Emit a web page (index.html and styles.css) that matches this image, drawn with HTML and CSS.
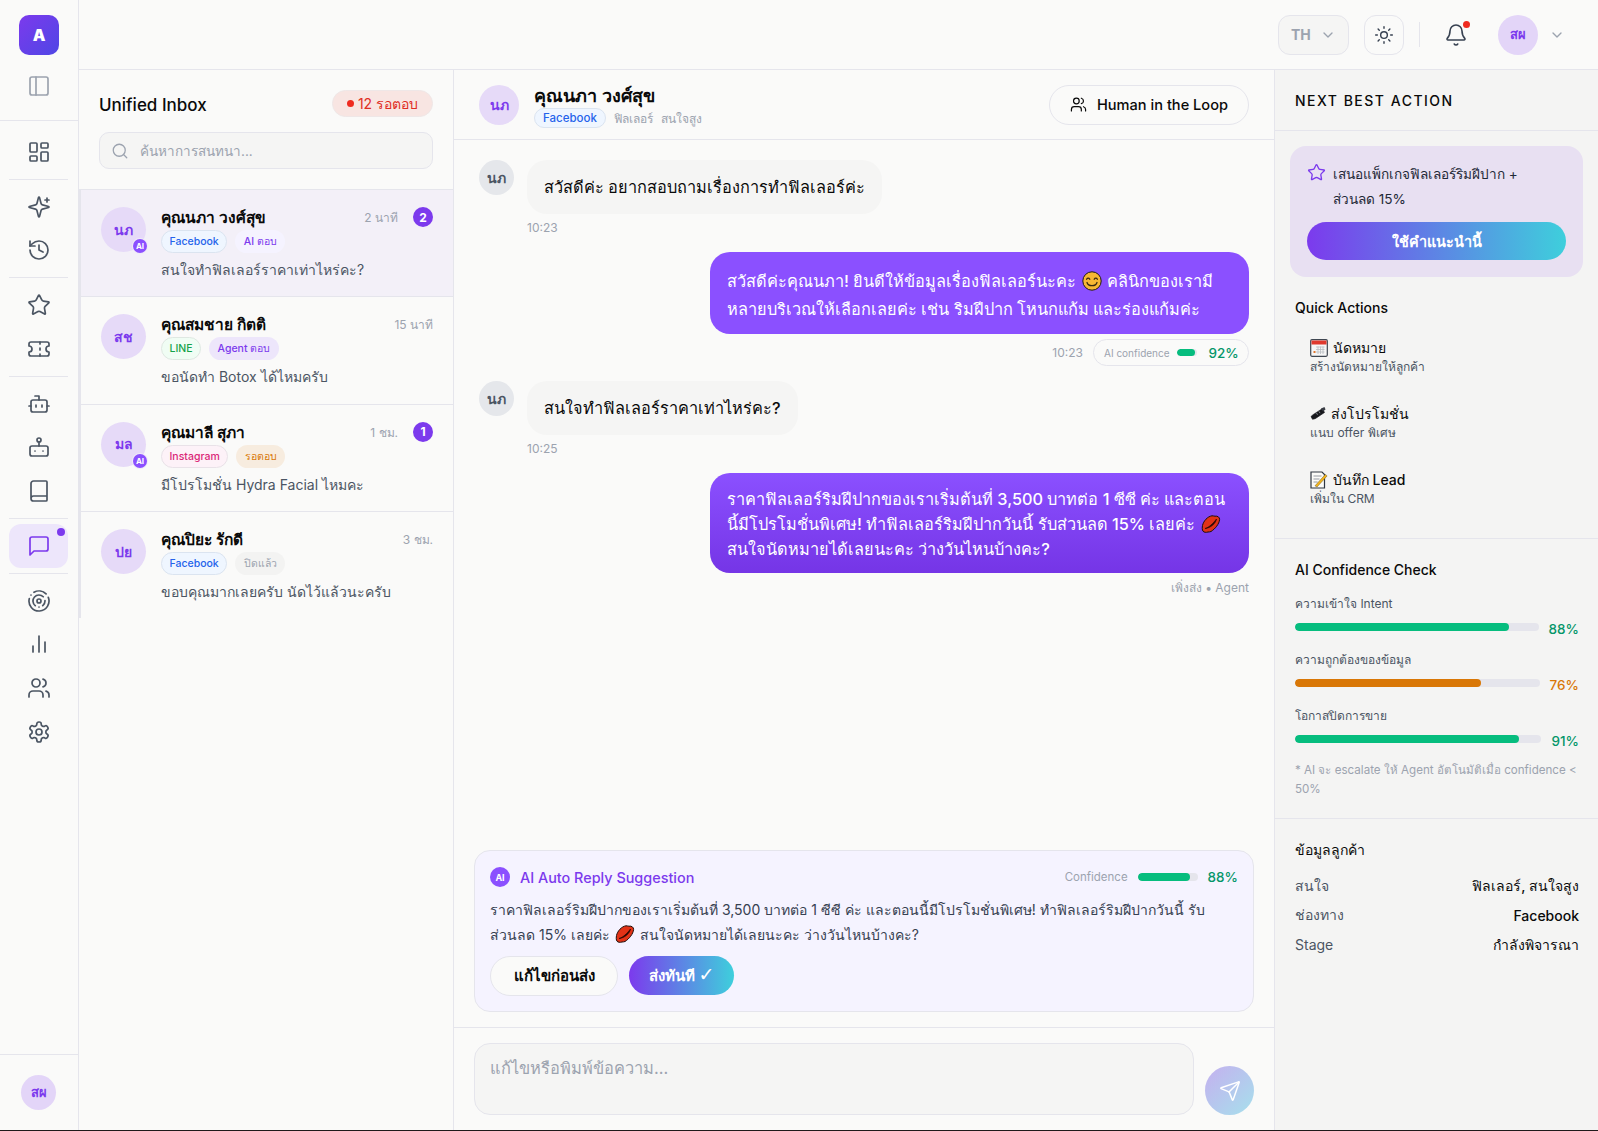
FILE: index.html
```html
<!DOCTYPE html>
<html lang="th">
<head>
<meta charset="utf-8">
<title>Unified Inbox</title>
<link rel="stylesheet" href="styles.css">
</head>
<body>
<svg class="defs" width="0" height="0">
<defs>
<symbol id="i-panel" viewBox="0 0 24 24"><rect x="3" y="3" width="18" height="18" rx="2"/><path d="M9 3v18"/></symbol>
<symbol id="i-dash" viewBox="0 0 24 24"><rect x="3" y="3" width="7" height="9" rx="1"/><rect x="14" y="3" width="7" height="5" rx="1"/><rect x="14" y="12" width="7" height="9" rx="1"/><rect x="3" y="16" width="7" height="5" rx="1"/></symbol>
<symbol id="i-sparkle" viewBox="0 0 24 24"><path d="M9.937 15.5A2 2 0 0 0 8.5 14.063l-6.135-1.582a.5.5 0 0 1 0-.962L8.5 9.936A2 2 0 0 0 9.937 8.5l1.582-6.135a.5.5 0 0 1 .963 0L14.063 8.5A2 2 0 0 0 15.5 9.937l6.135 1.581a.5.5 0 0 1 0 .964L15.5 14.063a2 2 0 0 0-1.437 1.437l-1.582 6.135a.5.5 0 0 1-.963 0z"/><path d="M20 3v4M22 5h-4"/></symbol>
<symbol id="i-history" viewBox="0 0 24 24"><path d="M3 12a9 9 0 1 0 9-9 9.75 9.75 0 0 0-6.74 2.74L3 8"/><path d="M3 3v5h5"/><path d="M12 7v5l4 2"/></symbol>
<symbol id="i-star" viewBox="0 0 24 24"><path d="M11.525 2.295a.53.53 0 0 1 .95 0l2.31 4.679a2.123 2.123 0 0 0 1.595 1.16l5.166.756a.53.53 0 0 1 .294.904l-3.736 3.638a2.123 2.123 0 0 0-.611 1.878l.882 5.14a.53.53 0 0 1-.771.56l-4.618-2.428a2.122 2.122 0 0 0-1.973 0L6.396 21.01a.53.53 0 0 1-.77-.56l.881-5.139a2.122 2.122 0 0 0-.611-1.879L2.16 9.795a.53.53 0 0 1 .294-.906l5.165-.755a2.122 2.122 0 0 0 1.597-1.16z"/></symbol>
<symbol id="i-ticket" viewBox="0 0 24 24"><path d="M2 9a3 3 0 0 1 0 6v2a2 2 0 0 0 2 2h16a2 2 0 0 0 2-2v-2a3 3 0 0 1 0-6V7a2 2 0 0 0-2-2H4a2 2 0 0 0-2 2Z"/><path d="M13 5v2M13 17v2M13 11v2"/></symbol>
<symbol id="i-bot" viewBox="0 0 24 24"><path d="M12 8V4H8"/><rect x="4" y="8" width="16" height="12" rx="2"/><path d="M2 14h2M20 14h2M15 13v2M9 13v2"/></symbol>
<symbol id="i-bot2" viewBox="0 0 24 24"><rect x="3" y="11" width="18" height="10" rx="2"/><circle cx="12" cy="5" r="2"/><path d="M12 7v4M8 16h.01M16 16h.01"/></symbol>
<symbol id="i-book" viewBox="0 0 24 24"><path d="M4 19.5v-15A2.5 2.5 0 0 1 6.5 2H19a1 1 0 0 1 1 1v18a1 1 0 0 1-1 1H6.5a1 1 0 0 1 0-5H20"/></symbol>
<symbol id="i-chat" viewBox="0 0 24 24"><path d="M21 15a2 2 0 0 1-2 2H7l-4 4V5a2 2 0 0 1 2-2h14a2 2 0 0 1 2 2z"/></symbol>
<symbol id="i-target" viewBox="0 0 24 24"><path d="M19.07 4.93A10 10 0 0 0 6.99 3.34M4 6h.01M2.29 9.62a10 10 0 1 0 19.02-1.27M16.24 7.76a6 6 0 1 0-8.01 8.91M12 18h.01M17.99 11.66a6 6 0 0 1-2.22 5"/><circle cx="12" cy="12" r="2"/></symbol>
<symbol id="i-bars" viewBox="0 0 24 24"><path d="M18 20V10M12 20V4M6 20v-6"/></symbol>
<symbol id="i-users" viewBox="0 0 24 24"><path d="M16 21v-2a4 4 0 0 0-4-4H6a4 4 0 0 0-4 4v2"/><circle cx="9" cy="7" r="4"/><path d="M22 21v-2a4 4 0 0 0-3-3.87M16 3.13a4 4 0 0 1 0 7.75"/></symbol>
<symbol id="i-gear" viewBox="0 0 24 24"><path d="M12.22 2h-.44a2 2 0 0 0-2 2v.18a2 2 0 0 1-1 1.73l-.43.25a2 2 0 0 1-2 0l-.15-.08a2 2 0 0 0-2.73.73l-.22.38a2 2 0 0 0 .73 2.73l.15.1a2 2 0 0 1 1 1.72v.51a2 2 0 0 1-1 1.74l-.15.09a2 2 0 0 0-.73 2.73l.22.38a2 2 0 0 0 2.73.73l.15-.08a2 2 0 0 1 2 0l.43.25a2 2 0 0 1 1 1.73V20a2 2 0 0 0 2 2h.44a2 2 0 0 0 2-2v-.18a2 2 0 0 1 1-1.73l.43-.25a2 2 0 0 1 2 0l.15.08a2 2 0 0 0 2.73-.73l.22-.39a2 2 0 0 0-.73-2.73l-.15-.08a2 2 0 0 1-1-1.74v-.5a2 2 0 0 1 1-1.74l.15-.09a2 2 0 0 0 .73-2.73l-.22-.38a2 2 0 0 0-2.73-.73l-.15.08a2 2 0 0 1-2 0l-.43-.25a2 2 0 0 1-1-1.73V4a2 2 0 0 0-2-2z"/><circle cx="12" cy="12" r="3"/></symbol>
<symbol id="i-sun" viewBox="0 0 24 24"><circle cx="12" cy="12" r="4"/><path d="M12 2v2M12 20v2M4.93 4.93l1.41 1.41M17.66 17.66l1.41 1.41M2 12h2M20 12h2M6.34 17.66l-1.41 1.41M19.07 4.93l-1.41 1.41"/></symbol>
<symbol id="i-bell" viewBox="0 0 24 24"><path d="M10.268 21a2 2 0 0 0 3.464 0"/><path d="M3.262 15.326A1 1 0 0 0 4 17h16a1 1 0 0 0 .74-1.673C19.41 13.956 18 12.499 18 8A6 6 0 0 0 6 8c0 4.499-1.411 5.956-2.738 7.326"/></symbol>
<symbol id="i-search" viewBox="0 0 24 24"><circle cx="11" cy="11" r="8"/><path d="m21 21-4.3-4.3"/></symbol>
<symbol id="i-send" viewBox="0 0 24 24"><path d="M14.536 21.686a.5.5 0 0 0 .937-.024l6.5-19a.496.496 0 0 0-.635-.635l-19 6.5a.5.5 0 0 0-.024.937l7.93 3.18a2 2 0 0 1 1.112 1.11z"/><path d="m21.854 2.147-10.94 10.939"/></symbol>
<symbol id="i-chev" viewBox="0 0 24 24"><path d="m6 9 6 6 6-6"/></symbol>
<symbol id="e-smile" viewBox="0 0 20 20"><circle cx="10" cy="10" r="9.2" fill="#f7b733" stroke="#1f1a12" stroke-width="1"/><path d="M4.6 8.2c.8-1.4 2.4-1.4 3.2 0M12.2 8.2c.8-1.4 2.4-1.4 3.2 0" fill="none" stroke="#3a2a10" stroke-width="1.3" stroke-linecap="round"/><path d="M5 11.5c1.2 4.2 8.8 4.2 10 0" fill="none" stroke="#3a2a10" stroke-width="1.3" stroke-linecap="round"/></symbol>
<symbol id="e-lips" viewBox="0 0 20 20"><path d="M1.500 11.500C2.500 7 6.500 2.500 11 1.800c1.200-.2 2 .5 3 .4 2.400-.5 4.800 1 4.600 3.300C18.200 10 14 15 10 17.500c-1 .6-2 .2-3 .5-2 .6-4 .4-5-.8-1-1.400-.8-3.800-.5-5.700z" fill="#e23216" stroke="#1d0f0c" stroke-width="1"/><path d="M4 14.500c4-1 8-5 11.500-9.500C14.800 9.500 9.500 14 4 14.500z" fill="#2a0805" stroke="#2a0805" stroke-width=".7"/></symbol>
<symbol id="e-cal" viewBox="0 0 18 18"><rect x=".7" y=".7" width="16.600" height="16.600" rx="1.200" fill="#f6f6f6" stroke="#3f4650" stroke-width="1.200"/><rect x="1.500" y="1.500" width="15" height="4" fill="#e0392e"/><path d="M6 8h8.500M6 10.500h8.500M6 13h8.500M8 7.500v7.500M10.500 7.500v7.500M13 7.500v7.500" stroke="#b9bcc2" stroke-width=".8"/><rect x="3.500" y="12" width="2" height="2" fill="#e0762e"/></symbol>
<symbol id="e-syringe" viewBox="0 0 16 16"><path d="M1 11.500l1.500 2.800 2.700-.6 9.300-6.200-2-4-9.500 6.200z" fill="#17181c" stroke="#17181c" stroke-width=".6"/><path d="M11 3.500l3.500-1.500 1 2.500-2.500 2z" fill="#3a3d45"/><path d="M6.500 8l1 1.800M9 6.400l1 1.800" stroke="#9aa0a8" stroke-width=".8"/></symbol>
<symbol id="e-memo" viewBox="0 0 18 18"><path d="M1 1h11l2.500 2.500V17H1z" fill="#fbfbf8" stroke="#2f3640" stroke-width="1.200"/><path d="M3.500 5h8M3.500 8h6M3.500 11h4" stroke="#8a8f98" stroke-width=".9"/><path d="M5 14.800 15.300 3.400l1.800 1.500L7 16z" fill="#f4b41a" stroke="#6b5a2a" stroke-width=".5"/></symbol>
</defs>
</svg>
<div class="app">
  <aside class="rail">
    <div class="rail-top">
      <div class="logo">A</div>
      <svg class="ico ico-muted toggle"><use href="#i-panel"/></svg>
    </div>
    <nav class="rail-nav">
      <div class="group group-first">
        <a class="nav"><svg class="ico"><use href="#i-dash"/></svg></a>
      </div>
      <div class="group">
        <a class="nav"><svg class="ico"><use href="#i-sparkle"/></svg></a>
        <a class="nav"><svg class="ico"><use href="#i-history"/></svg></a>
      </div>
      <div class="group">
        <a class="nav"><svg class="ico"><use href="#i-star"/></svg></a>
        <a class="nav"><svg class="ico"><use href="#i-ticket"/></svg></a>
      </div>
      <div class="group">
        <a class="nav"><svg class="ico"><use href="#i-bot"/></svg></a>
        <a class="nav"><svg class="ico"><use href="#i-bot2"/></svg></a>
        <a class="nav"><svg class="ico"><use href="#i-book"/></svg></a>
      </div>
      <div class="group">
        <a class="nav nav-active"><svg class="ico"><use href="#i-chat"/></svg><span class="nav-dot"></span></a>
      </div>
      <div class="group group-last">
        <a class="nav"><svg class="ico"><use href="#i-target"/></svg></a>
        <a class="nav"><svg class="ico"><use href="#i-bars"/></svg></a>
        <a class="nav"><svg class="ico"><use href="#i-users"/></svg></a>
        <a class="nav"><svg class="ico"><use href="#i-gear"/></svg></a>
      </div>
    </nav>
    <div class="rail-foot"><div class="avatar av-35 av-user">สผ</div></div>
  </aside>

  <div class="main">
    <header class="topbar">
      <div class="lang"><span>TH</span><svg class="ico ico-chev"><use href="#i-chev"/></svg></div>
      <div class="theme"><svg class="ico ico-sun"><use href="#i-sun"/></svg></div>
      <span class="top-sep"></span>
      <div class="bell"><svg class="ico ico-bell"><use href="#i-bell"/></svg><span class="bell-dot"></span></div>
      <div class="avatar av-40 av-user">สผ</div>
      <svg class="ico ico-chev ico-chev-user"><use href="#i-chev"/></svg>
    </header>

    <div class="columns">
      <section class="inbox">
        <div class="inbox-head">
          <div class="inbox-title">
            <h1>Unified Inbox</h1>
            <span class="wait-badge"><i></i>12 รอตอบ</span>
          </div>
          <div class="search"><svg class="ico ico-search"><use href="#i-search"/></svg><span>ค้นหาการสนทนา...</span></div>
        </div>
        <div class="threads">
          <article class="thread thread-active">
            <div class="avatar-wrap"><div class="avatar av-45">นภ</div><span class="ai-mini">AI</span></div>
            <div class="thread-body">
              <div class="thread-top"><strong>คุณนภา วงศ์สุข</strong><time>2 นาที</time><span class="count">2</span></div>
              <div class="tags"><span class="tag tag-fb">Facebook</span><span class="tag tag-ai">AI ตอบ</span></div>
              <p>สนใจทำฟิลเลอร์ราคาเท่าไหร่คะ?</p>
            </div>
          </article>
          <article class="thread">
            <div class="avatar-wrap"><div class="avatar av-45">สช</div></div>
            <div class="thread-body">
              <div class="thread-top"><strong>คุณสมชาย กิตติ</strong><time>15 นาที</time></div>
              <div class="tags"><span class="tag tag-line">LINE</span><span class="tag tag-agent">Agent ตอบ</span></div>
              <p>ขอนัดทำ Botox ได้ไหมครับ</p>
            </div>
          </article>
          <article class="thread">
            <div class="avatar-wrap"><div class="avatar av-45">มล</div><span class="ai-mini">AI</span></div>
            <div class="thread-body">
              <div class="thread-top"><strong>คุณมาลี สุภา</strong><time>1 ชม.</time><span class="count">1</span></div>
              <div class="tags"><span class="tag tag-ig">Instagram</span><span class="tag tag-wait">รอตอบ</span></div>
              <p>มีโปรโมชั่น Hydra Facial ไหมคะ</p>
            </div>
          </article>
          <article class="thread">
            <div class="avatar-wrap"><div class="avatar av-45">ปย</div></div>
            <div class="thread-body">
              <div class="thread-top"><strong>คุณปิยะ รักดี</strong><time>3 ชม.</time></div>
              <div class="tags"><span class="tag tag-fb">Facebook</span><span class="tag tag-closed">ปิดแล้ว</span></div>
              <p>ขอบคุณมากเลยครับ นัดไว้แล้วนะครับ</p>
            </div>
          </article>
        </div>
      </section>

      <section class="chat">
        <header class="chat-head">
          <div class="avatar av-40">นภ</div>
          <div class="chat-who">
            <h2>คุณนภา วงศ์สุข</h2>
            <div class="chat-sub"><span class="tag tag-fb tag-sm">Facebook</span><span>ฟิลเลอร์</span><span>สนใจสูง</span></div>
          </div>
          <button class="hitl"><svg class="ico ico-hitl"><use href="#i-users"/></svg>Human in the Loop</button>
        </header>

        <div class="messages">
          <div class="msg">
            <div class="avatar av-35 av-gray">นภ</div>
            <div class="msg-col">
              <div class="bubble bubble-in">สวัสดีค่ะ อยากสอบถามเรื่องการทำฟิลเลอร์ค่ะ</div>
              <div class="msg-time">10:23</div>
            </div>
          </div>
          <div class="msg msg-out">
            <div class="bubble bubble-out">สวัสดีค่ะคุณนภา! ยินดีให้ข้อมูลเรื่องฟิลเลอร์นะคะ <svg class="emoji"><use href="#e-smile"/></svg> คลินิกของเรามีหลายบริเวณให้เลือกเลยค่ะ เช่น ริมฝีปาก โหนกแก้ม และร่องแก้มค่ะ</div>
            <div class="msg-meta">
              <span>10:23</span>
              <span class="conf-pill"><em>AI confidence</em><span class="mini-track"><span class="mini-fill fill-92"></span></span><b>92%</b></span>
            </div>
          </div>
          <div class="msg">
            <div class="avatar av-35 av-gray">นภ</div>
            <div class="msg-col">
              <div class="bubble bubble-in">สนใจทำฟิลเลอร์ราคาเท่าไหร่คะ?</div>
              <div class="msg-time">10:25</div>
            </div>
          </div>
          <div class="msg msg-out">
            <div class="bubble bubble-out bubble-deep">ราคาฟิลเลอร์ริมฝีปากของเราเริ่มต้นที่ 3,500 บาทต่อ 1 ซีซี ค่ะ และตอนนี้มีโปรโมชั่นพิเศษ! ทำฟิลเลอร์ริมฝีปากวันนี้ รับส่วนลด 15% เลยค่ะ <svg class="emoji"><use href="#e-lips"/></svg> สนใจนัดหมายได้เลยนะคะ ว่างวันไหนบ้างคะ?</div>
            <div class="msg-meta"><span>เพิ่งส่ง • Agent</span></div>
          </div>
        </div>

        <div class="suggest">
          <div class="suggest-head">
            <span class="ai-dot">AI</span>
            <h3>AI Auto Reply Suggestion</h3>
            <span class="suggest-conf">Confidence</span>
            <span class="track-sm"><span class="fill-sm"></span></span>
            <b class="pct-green">88%</b>
          </div>
          <p>ราคาฟิลเลอร์ริมฝีปากของเราเริ่มต้นที่ 3,500 บาทต่อ 1 ซีซี ค่ะ และตอนนี้มีโปรโมชั่นพิเศษ! ทำฟิลเลอร์ริมฝีปากวันนี้ รับส่วนลด 15% เลยค่ะ <svg class="emoji"><use href="#e-lips"/></svg> สนใจนัดหมายได้เลยนะคะ ว่างวันไหนบ้างคะ?</p>
          <div class="suggest-actions">
            <button class="btn-outline">แก้ไขก่อนส่ง</button>
            <button class="btn-grad">ส่งทันที <span class="tick">✓</span></button>
          </div>
        </div>

        <div class="composer">
          <div class="composer-input">แก้ไขหรือพิมพ์ข้อความ...</div>
          <button class="send"><svg class="ico ico-send"><use href="#i-send"/></svg></button>
        </div>
      </section>

      <aside class="side">
        <div class="side-head"><h2>NEXT BEST ACTION</h2></div>
        <div class="nba-wrap">
          <div class="nba">
            <div class="nba-text"><svg class="ico ico-star"><use href="#i-star"/></svg><span>เสนอแพ็กเกจฟิลเลอร์ริมฝีปาก + ส่วนลด 15%</span></div>
            <button class="nba-btn">ใช้คำแนะนำนี้</button>
          </div>
        </div>
        <div class="side-sec quick">
          <h3>Quick Actions</h3>
          <div class="qa"><b><svg class="emoji emoji-qa"><use href="#e-cal"/></svg> นัดหมาย</b><small>สร้างนัดหมายให้ลูกค้า</small></div>
          <div class="qa"><b><svg class="emoji emoji-qa emoji-syringe"><use href="#e-syringe"/></svg> ส่งโปรโมชั่น</b><small>แนบ offer พิเศษ</small></div>
          <div class="qa"><b><svg class="emoji emoji-qa"><use href="#e-memo"/></svg> บันทึก Lead</b><small>เพิ่มใน CRM</small></div>
        </div>
        <div class="side-sec checks">
          <h3>AI Confidence Check</h3>
          <div class="check"><label>ความเข้าใจ Intent</label><div class="check-row"><span class="track"><span class="fill fill-88"></span></span><b class="pct-green">88%</b></div></div>
          <div class="check"><label>ความถูกต้องของข้อมูล</label><div class="check-row"><span class="track"><span class="fill fill-76"></span></span><b class="pct-amber">76%</b></div></div>
          <div class="check"><label>โอกาสปิดการขาย</label><div class="check-row"><span class="track"><span class="fill fill-91"></span></span><b class="pct-green">91%</b></div></div>
          <p class="note">* AI จะ escalate ให้ Agent อัตโนมัติเมื่อ confidence &lt; 50%</p>
        </div>
        <div class="side-sec cust">
          <h3>ข้อมูลลูกค้า</h3>
          <div class="kv"><span>สนใจ</span><b>ฟิลเลอร์, สนใจสูง</b></div>
          <div class="kv"><span>ช่องทาง</span><b>Facebook</b></div>
          <div class="kv"><span>Stage</span><b>กำลังพิจารณา</b></div>
        </div>
      </aside>
    </div>
  </div>
</div>
</body>
</html>
```
FILE: styles.css
```css
* { box-sizing: border-box; }
html, body { margin: 0; height: 100%; }
body {
  font-family: Inter, "Noto Sans", sans-serif;
  background: #1f1a1a;
  color: #0a0a0a;
  overflow: hidden;
}
h1, h2, h3, p { margin: 0; }
button { font-family: inherit; cursor: pointer; }
.defs { position: absolute; }
.ico { width: 24px; height: 24px; fill: none; stroke: #4b5563; stroke-width: 1.7; stroke-linecap: round; stroke-linejoin: round; display: block; }
.emoji { width: 20px; height: 20px; vertical-align: -4px; margin: 0 1px; }
.emoji-qa { width: 18px; height: 18px; margin: 0 1px 0 0; }
.emoji-syringe { width: 16px; height: 16px; vertical-align: -2px; }
.app { display: flex; height: 1130px; background: #fafaf9; }

/* rail */
.rail { width: 79px; flex: none; border-right: 1px solid #e5e5ec; display: flex; flex-direction: column; }
.rail-top { height: 121px; border-bottom: 1px solid #e5e5ec; display: flex; flex-direction: column; align-items: center; padding-top: 15px; }
.logo { width: 40px; height: 40px; border-radius: 10px; background: linear-gradient(135deg, #7c3aed, #4f46e5); color: #fff; font-weight: 900; font-size: 16px; display: flex; align-items: center; justify-content: center; }
.toggle { margin: 19px 1px 0 0; stroke: #9ca3af; }
.rail-nav { flex: 1; padding: 0 10px 0 9px; }
.group { padding: 5px 0; border-bottom: 1px solid #e5e5ec; }
.group-first { padding-top: 9px; }
.group-last { border-bottom: 0; }
.nav { height: 43.75px; display: flex; align-items: center; justify-content: center; border-radius: 12px; position: relative; }
.nav-active { background: #ede6fb; }
.nav-active .ico { stroke: #7c3aed; }
.nav-dot { position: absolute; top: 4px; right: 3px; width: 8px; height: 8px; border-radius: 50%; background: #7c3aed; }
.rail-foot { height: 76px; border-top: 1px solid #e5e5ec; display: flex; justify-content: center; padding: 20px 1px 0 0; }

.avatar { border-radius: 50%; background: #e6daf8; color: #7c3aed; display: flex; align-items: center; justify-content: center; font-weight: 700; flex: none; }
.av-35 { width: 35px; height: 35px; font-size: 14px; }
.av-40 { width: 40px; height: 40px; font-size: 14px; }
.av-45 { width: 45px; height: 45px; font-size: 14px; }
.av-user { background: #e3d5f8; font-size: 13px; }
.av-gray { background: #e5e7eb; color: #4b5563; }

/* main */
.main { flex: 1; display: flex; flex-direction: column; min-width: 0; }
.topbar { height: 70px; flex: none; border-bottom: 1px solid #e5e5ec; display: flex; align-items: center; padding-right: 33px; justify-content: flex-end; }
.lang { width: 71px; height: 40px; border: 1px solid #e5e5ec; border-radius: 12px; background: #f5f5f4; display: flex; align-items: center; gap: 9px; padding-left: 12px; font-size: 14px; font-weight: 700; color: #9ca3af; }
.ico-chev { width: 16px; height: 16px; stroke: #9ca3af; stroke-width: 2; }
.theme { width: 40px; height: 40px; border: 1px solid #e5e5ec; border-radius: 12px; margin-left: 15px; display: flex; align-items: center; justify-content: center; }
.ico-sun { width: 20px; height: 20px; stroke: #374151; stroke-width: 1.7; }
.top-sep { width: 1px; height: 25px; background: #e5e5ec; margin: 0 16px 0 15px; }
.bell { width: 40px; height: 40px; margin-right: 22px; display: flex; align-items: center; justify-content: center; position: relative; }
.ico-bell { width: 24px; height: 24px; stroke: #374151; stroke-width: 1.6; }
.bell-dot { position: absolute; top: 6px; right: 6px; width: 7px; height: 7px; background: #ef2b20; border-radius: 50%; }
.ico-chev-user { margin-left: 11px; }

.columns { flex: 1; display: flex; min-height: 0; }

/* inbox */
.inbox { width: 375px; flex: none; border-right: 1px solid #e5e5ec; }
.inbox-head { padding: 20px; }
.inbox-title { display: flex; justify-content: space-between; align-items: center; height: 27px; }
.inbox-title h1 { font-size: 17px; font-weight: 500; padding-top: 3px; }
.wait-badge { height: 27px; width: 101px; border-radius: 14px; background: #f8e5e2; border: 1px solid #efe7e7; color: #e02d24; font-size: 14px; display: flex; align-items: center; justify-content: center; gap: 4px; }
.wait-badge i { width: 7px; height: 7px; border-radius: 50%; background: #ef2b20; }
.search { margin-top: 15px; height: 37px; border: 1px solid #e5e5ec; border-radius: 10px; background: #f5f5f4; display: flex; align-items: center; gap: 11px; padding-left: 11px; font-size: 13.5px; color: #9ca3af; }
.ico-search { width: 18px; height: 18px; stroke: #9ca3af; }
.threads { border-left: 2px solid #e5e5ec; border-top: 1px solid #e5e5ec; }
.thread { display: flex; gap: 15px; padding: 17px 20px 0; height: 107.4px; border-bottom: 1px solid #e5e5ec; }
.thread:last-child { border-bottom: 0; height: 106px; }
.thread-active { background: #f3f0f8; }
.avatar-wrap { position: relative; width: 45px; height: 45px; flex: none; }
.ai-mini { position: absolute; right: -1px; bottom: -1px; width: 14px; height: 14px; border-radius: 50%; background: #8b50ff; color: #fff; font-size: 8px; font-weight: 700; display: flex; align-items: center; justify-content: center; box-shadow: 0 0 0 1px #f0eaf8; }
.thread-body { flex: 1; min-width: 0; }
.thread-top { display: flex; align-items: center; height: 20px; padding-top: 1px; }
.thread-top strong { flex: 1; font-size: 15.5px; font-weight: 700; }
.thread-top time { font-size: 12px; color: #9ca3af; }
.count { width: 20px; height: 20px; border-radius: 50%; background: #7c3aed; color: #fff; font-size: 12px; font-weight: 700; display: flex; align-items: center; justify-content: center; margin-left: 15px; margin-top: -1px; }
.tags { display: flex; gap: 8px; margin-top: 3px; }
.tag { height: 23px; padding: 0 7.5px; border-radius: 12px; font-size: 10.5px; font-weight: 500; display: inline-flex; align-items: center; border: 1px solid transparent; }
.tag-sm { height: 20px; padding: 0 8px; font-size: 11.5px; }
.tag-fb { background: #eff6ff; border-color: #dbe4f0; color: #2563eb; }
.tag-ai { background: #f5f3ff; color: #7c3aed; }
.tag-line { background: #f0fdf4; border-color: #dfe8e2; color: #16a34a; }
.tag-agent { background: #ede6fb; color: #7c3aed; }
.tag-ig { background: #fdf2f8; border-color: #e9e2e8; color: #db2777; }
.tag-wait { background: #f7ecdf; color: #d97706; }
.tag-closed { background: #f3f3f2; color: #9ca3af; }
.thread-body p { margin-top: 7px; font-size: 14px; color: #4b5563; line-height: 20px; }

/* chat */
.chat { flex: 1; min-width: 0; display: flex; flex-direction: column; border-right: 1px solid #e5e5ec; }
.chat-head { height: 70px; flex: none; border-bottom: 1px solid #e5e5ec; display: flex; align-items: center; padding: 0 25px; gap: 15px; }
.chat-who { flex: 1; align-self: flex-start; padding-top: 15px; }
.chat-who h2 { font-size: 18px; font-weight: 600; line-height: 22px; }
.chat-sub { display: flex; align-items: center; gap: 8px; font-size: 12px; color: #9ca3af; height: 20px; margin-top: 1px; }
.hitl { width: 200px; height: 40px; border-radius: 20px; border: 1px solid #e5e5ec; background: #fafaf9; font-size: 14.6px; font-weight: 500; display: flex; align-items: center; justify-content: center; gap: 10px; color: #0a0a0a; }
.ico-hitl { width: 17px; height: 17px; stroke: #0a0a0a; stroke-width: 1.7; }
.messages { flex: 1; min-height: 0; padding: 20px 25px 0; display: flex; flex-direction: column; }
.msg { display: flex; gap: 13px; margin-bottom: 15px; }
.msg-col { display: flex; flex-direction: column; align-items: flex-start; }
.bubble { font-size: 16.3px; line-height: 28px; padding: 13px 17px; border-radius: 20px; font-weight: 500; }
.bubble-in { background: #f5f5f4; }
.msg-time { font-size: 12px; color: #9ca3af; margin-top: 5px; line-height: 18px; }
.msg-out { flex-direction: column; align-items: flex-end; gap: 5px; margin-bottom: 15px; }
.bubble-out { width: 539px; background: #8b50ff; color: #fff; padding-top: 14.5px; padding-bottom: 11.5px; }
.bubble-deep { background: linear-gradient(180deg, #8b50ff, #7535e6); padding-top: 14px; padding-bottom: 11px; line-height: 25px; }
.msg-meta { display: flex; align-items: center; gap: 10px; font-size: 12px; color: #9ca3af; }
.conf-pill { height: 27px; width: 156px; border: 1px solid #e5e5ec; border-radius: 14px; display: flex; align-items: center; gap: 7px; padding-left: 10px; }
.conf-pill em { font-style: normal; font-size: 10px; }
.conf-pill b { font-size: 13.5px; font-weight: 500; color: #059669; margin-left: 5px; }
.mini-track { width: 20px; height: 7px; border-radius: 4px; background: #e5e5ec; overflow: hidden; display: block; }
.mini-fill { display: block; height: 100%; background: #06bd7e; border-radius: 4px; }
.fill-92 { width: 92%; }

.suggest { margin: 0 20px; height: 162px; border: 1px solid #e5e5ec; border-radius: 16px; background: #f5f3ff; padding: 16px 15px 15px; flex: none; }
.suggest-head { display: flex; align-items: center; height: 20px; }
.ai-dot { width: 20px; height: 20px; border-radius: 50%; background: #8b50ff; color: #fff; font-size: 9px; font-weight: 700; display: flex; align-items: center; justify-content: center; }
.suggest-head h3 { flex: 1; margin-left: 10px; font-size: 14.4px; font-weight: 500; color: #7c3aed; }
.suggest-conf { font-size: 11.5px; color: #9ca3af; }
.track-sm { width: 60px; height: 8px; margin: 0 10px; border-radius: 4px; background: #e5e5ec; display: block; overflow: hidden; }
.fill-sm { display: block; width: 88%; height: 100%; background: #06bd7e; border-radius: 4px; }
.pct-green { color: #059669; font-size: 13.5px; font-weight: 500; }
.pct-amber { color: #d97706; font-size: 13.5px; font-weight: 500; }
.suggest p { margin-top: 10px; font-size: 14px; line-height: 25px; color: #374151; }
.suggest-actions { display: flex; gap: 11px; margin-top: 9px; }
.btn-outline { width: 128px; height: 40px; border: 1px solid #e5e5ec; border-radius: 20px; background: #fafaf9; font-size: 15px; font-weight: 600; color: #0a0a0a; }
.btn-grad { width: 105px; height: 39px; border: 0; border-radius: 20px; background: linear-gradient(90deg, #7c3aed, #3ecfdc); font-size: 15px; font-weight: 600; color: #fff; }
.tick { font-family: "DejaVu Sans", sans-serif; font-size: 19px; font-weight: 700; line-height: 1; }
.composer { margin-top: 15px; border-top: 1px solid #e5e5ec; padding: 15px 20px 0; height: 103px; flex: none; display: flex; align-items: flex-end; gap: 11px; }
.composer-input { flex: 1; align-self: flex-start; height: 72px; border: 1px solid #e5e5ec; border-radius: 16px; background: #f5f5f4; padding: 11px 15px; font-size: 16.4px; color: #9ca3af; }
.send { width: 49px; height: 49px; flex: none; border: 0; border-radius: 50%; background: linear-gradient(135deg, #c5b0ef, #a6e0ec); display: flex; align-items: center; justify-content: center; margin-bottom: 15px; }
.ico-send { width: 22px; height: 22px; stroke: #fff; stroke-width: 1.6; }

/* side */
.side { width: 323px; flex: none; background: #f4f4f3; }
.side-head { height: 61px; border-bottom: 1px solid #e5e5ec; padding: 0 20px; display: flex; align-items: center; }
.side-head h2 { font-size: 14px; font-weight: 500; letter-spacing: 1.5px; }
.nba-wrap { padding: 15px 15px 0; }
.nba { background: #e8e0f2; border-radius: 16px; padding: 16px 17px 0; height: 131px; }
.nba-text { display: flex; gap: 7px; padding-right: 10px; font-size: 13.6px; line-height: 24.5px; color: #1f2937; }
.ico-star { width: 19px; height: 19px; stroke: #7c3aed; flex: none; margin-top: 1px; }
.nba-btn { width: 100%; height: 38px; margin-top: 11px; border: 0; border-radius: 19px; background: linear-gradient(90deg, #7c3aed, #3ecfdc); color: #fff; font-size: 14.4px; font-weight: 600; }
.side-sec { padding: 0 19px 0 20px; border-bottom: 1px solid #e5e5ec; }
.side-sec h3 { font-size: 14px; font-weight: 500; line-height: 20px; }
.quick { padding-top: 21px; height: 262px; }
.qa { padding-left: 15px; height: 66px; padding-top: 12px; display: flex; flex-direction: column; }
.qa:first-of-type { margin-top: 8px; }
.qa b { font-size: 14px; font-weight: 500; line-height: 20px; }
.qa small { font-size: 12px; color: #4b5563; line-height: 18px; }
.checks { padding-top: 21px; height: 280px; }
.check { margin-top: 12px; }
.check:first-of-type { margin-top: 15px; }
.check label { display: block; font-size: 12px; color: #4b5563; line-height: 18px; }
.check-row { display: flex; align-items: center; gap: 10px; height: 24px; margin-top: 2px; }
.check-row b { padding-top: 4px; }
.track { flex: 1; height: 8px; border-radius: 4px; background: #e5e5ec; overflow: hidden; display: block; }
.fill { display: block; height: 100%; border-radius: 4px; }
.fill-88 { width: 88%; background: #06bd7e; }
.fill-76 { width: 76%; background: #d97706; }
.fill-91 { width: 91%; background: #06bd7e; }
.note { margin-top: 10px; font-size: 11.6px; line-height: 19px; color: #9ca3af; }
.cust { border-bottom: 0; padding-top: 21px; }
.kv { display: flex; justify-content: space-between; align-items: center; height: 29.5px; font-size: 14px; color: #4b5563; }
.kv:first-of-type { margin-top: 11px; }
.kv b { font-weight: 500; color: #0a0a0a; }
```
